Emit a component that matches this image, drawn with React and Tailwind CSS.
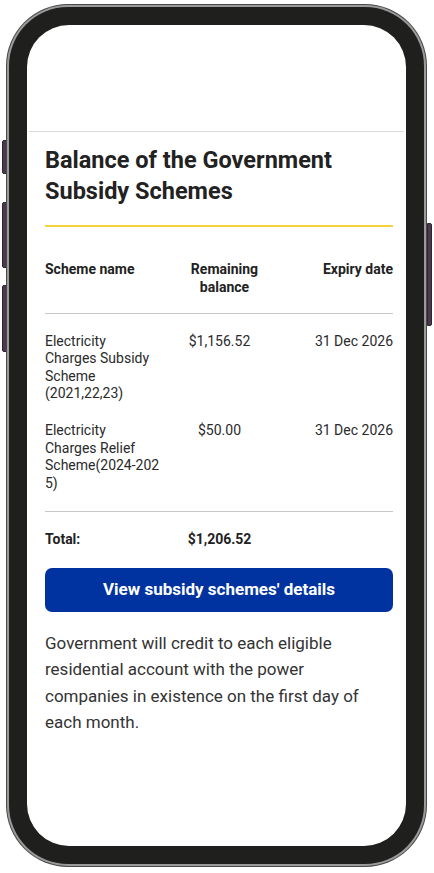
import React from 'react';

const rows = [
  { name: 'Electricity Charges Subsidy Scheme (2021,22,23)', balance: '$1,156.52', expiry: '31 Dec 2026' },
  { name: 'Electricity Charges Relief Scheme(2024-\u20602025)', balance: '$50.00', expiry: '31 Dec 2026' },
];

const SideButton = ({ className }) => (
  <div className={`absolute w-[5px] bg-[#4b3a4e] border border-[#2e2430] ${className}`} />
);

const App = () => {
  return (
    <div className="relative w-[434px] h-[873px] bg-white overflow-hidden" style={{ fontFamily: 'Roboto, "Noto Sans", sans-serif' }}>
      {/* side keys */}
      <SideButton className="left-[2px] top-[140px] h-[34px] rounded-l-[2px]" />
      <SideButton className="left-[2px] top-[202px] h-[66px] rounded-l-[2px]" />
      <SideButton className="left-[2px] top-[285px] h-[67px] rounded-l-[2px]" />
      <SideButton className="left-[427px] top-[223px] h-[103px] rounded-r-[2px]" />

      {/* phone body */}
      <div className="absolute left-[6px] top-[4px] w-[421px] h-[863px] rounded-[62px] bg-[#4a4a4a] p-[1px]">
        <div className="w-full h-full rounded-[61px] bg-[#9a9a9a] p-[2px]">
          <div className="w-full h-full rounded-[59px] bg-[#1f1f1d] p-[18px]">
            <div className="w-full h-full rounded-[42px] bg-white overflow-hidden flex flex-col">
              <div className="h-[106px] shrink-0" />
              <div className="mx-[2px] h-px bg-[#dcdcdc]" />

              <div className="pl-[18px] pr-[13px] pt-[13px]">
                <h1 className="text-[23.5px] leading-[31px] font-bold text-[#222222]">
                  Balance of the Government Subsidy Schemes
                </h1>
                <div className="mt-[18px] h-[2px] bg-[#f6d437]" />

                {/* table */}
                <div className="text-[14px] leading-[17.6px] text-[#2a2a2a]">
                  <div className="grid grid-cols-[115px_119px_1fr] pt-[34px] pb-[17px] font-bold text-[#222222]">
                    <div>Scheme name</div>
                    <div className="text-center pl-[10px]">Remaining<br />balance</div>
                    <div className="text-right">Expiry date</div>
                  </div>
                  <div className="h-px bg-[#c8c8c8]" />
                  <div className="flex flex-col gap-[19px] pt-[18.5px] pb-[19px]">
                    {rows.map((r, i) => (
                      <div key={i} className="grid grid-cols-[115px_119px_1fr]">
                        <div className="break-words">{r.name}</div>
                        <div className="text-center">{r.balance}</div>
                        <div className="text-right">{r.expiry}</div>
                      </div>
                    ))}
                  </div>
                  <div className="h-px bg-[#c8c8c8]" />
                  <div className="grid grid-cols-[115px_119px_1fr] pt-[19px] font-bold text-[#222222]">
                    <div>Total:</div>
                    <div className="text-center">$1,206.52</div>
                    <div />
                  </div>
                </div>

                <button className="mt-[19px] w-full h-[44px] rounded-[7px] bg-[#0033a0] text-white text-[17px] font-bold">
                  View subsidy schemes' details
                </button>

                <p className="mt-[18px] pr-[20px] text-[17px] leading-[26.3px] text-[#333333]">
                  Government will credit to each eligible residential account with the power companies in existence on the first day of each month.
                </p>
              </div>
            </div>
          </div>
        </div>
      </div>
    </div>
  );
};

export default App;
